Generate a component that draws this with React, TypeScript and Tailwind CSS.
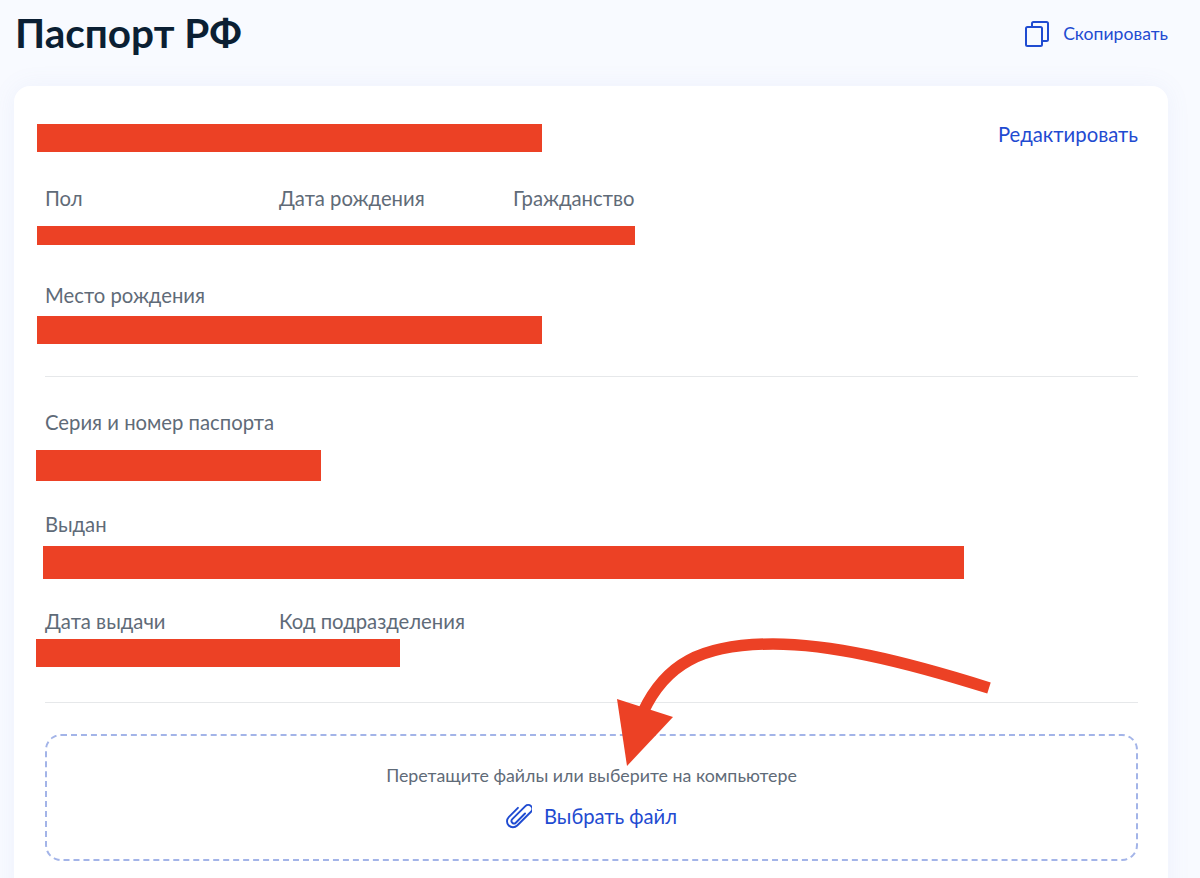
const labelCls = "text-[20.3px] leading-[24px] text-[#5f6b78]";

function Redacted({ className }: { className: string }) {
  return <div className={`bg-[#ec4125] ${className}`} />;
}

function CopyIcon() {
  return (
    <svg width="24" height="26" viewBox="0 0 24 26" fill="none" stroke="#1f4bd1" strokeWidth="2" className="shrink-0">
      <path d="M7 5.500V2.500c0-.8.6-1.500 1.500-1.500H21.500c.8 0 1.500.7 1.500 1.500V18.500c0 .8-.7 1.500-1.500 1.500H17" strokeLinejoin="round" />
      <rect x="1" y="6" width="16" height="19" rx="1.500" />
    </svg>
  );
}

function ClipIcon() {
  return (
    <svg width="26" height="26" viewBox="-13 -13 26 26" fill="none" stroke="#1f4bd1" strokeWidth="1.900" strokeLinecap="round" className="shrink-0">
      <path transform="rotate(45)" d="M2.500-6V7a2.500 2.500 0 0 1-5 0V-11.500a4 4 0 0 1 8 0V8a6 6 0 0 1-12 0V-5" />
    </svg>
  );
}

function Arrow() {
  return (
    <svg className="absolute left-0 top-0 pointer-events-none" width="1200" height="878" viewBox="0 0 1200 878" fill="none">
      <path d="M989 688C900 660 830 644 773 644C700 644 665 665 643 712" stroke="#ec4125" strokeWidth="11.500" />
      <path d="M617 699L673 717L627 766Z" fill="#ec4125" />
    </svg>
  );
}

export default function App() {
  return (
    <div className="relative h-[878px] overflow-hidden bg-[#f8faff] font-['Lato','Noto_Sans',sans-serif]">
      <div className="flex justify-between pl-[15px] pr-8 pt-[9px] h-[86px] items-start">
        <h1 className="text-[40.500px] leading-[48px] font-bold text-[#0b1f33]">Паспорт РФ</h1>
        <div className="flex items-center gap-[14px] mt-[12px]">
          <CopyIcon />
          <span className="text-[17.600px] leading-[24px] text-[#1f4bd1]">Скопировать</span>
        </div>
      </div>

      <div className="mx-[14px] w-[1154px] h-[820px] rounded-[16px] bg-white shadow-[0_0_24px_rgba(120,140,220,0.08)] pt-[38px] pl-[31px] pr-[30px]">
        <div className="flex items-start justify-between">
          <Redacted className="-ml-2 w-[505px] h-[28px]" />
          <span className="-mt-[2px] text-[20.300px] leading-[24px] text-[#1f4bd1]">Редактировать</span>
        </div>

        <div className="flex mt-[34px]">
          <div className={`w-[234px] ${labelCls}`}>Пол</div>
          <div className={`w-[234px] ${labelCls}`}>Дата рождения</div>
          <div className={labelCls}>Гражданство</div>
        </div>
        <Redacted className="-ml-2 mt-[16px] w-[598px] h-[19px]" />

        <div className={`mt-[38px] ${labelCls}`}>Место рождения</div>
        <Redacted className="-ml-2 mt-[9px] w-[505px] h-[28px]" />

        <div className="mt-[32px] h-px bg-[#e6e8ea]" />

        <div className={`mt-[33px] ${labelCls}`}>Серия и номер паспорта</div>
        <Redacted className="-ml-[9px] mt-[16px] w-[285px] h-[31px]" />

        <div className={`mt-[31px] ${labelCls}`}>Выдан</div>
        <Redacted className="-ml-[2px] mt-[10px] w-[921px] h-[33px]" />

        <div className="flex mt-[30px]">
          <div className={`w-[234px] ${labelCls}`}>Дата выдачи</div>
          <div className={labelCls}>Код подразделения</div>
        </div>
        <Redacted className="-ml-[9px] mt-[6px] w-[364px] h-[28px]" />

        <div className="mt-[35px] h-px bg-[#e6e8ea]" />

        <div className="mt-[31px] h-[127px] rounded-[16px] border-2 border-dashed border-[#a3b4e8] flex flex-col items-center pt-[28px]">
          <p className="text-[17.800px] leading-[22px] text-[#5f6b78]">Перетащите файлы или выберите на компьютере</p>
          <div className="flex items-center gap-[12px] mt-[17px]">
            <ClipIcon />
            <span className="text-[20.200px] leading-[24px] text-[#1f4bd1]">Выбрать файл</span>
          </div>
        </div>
      </div>

      <Arrow />
    </div>
  );
}
